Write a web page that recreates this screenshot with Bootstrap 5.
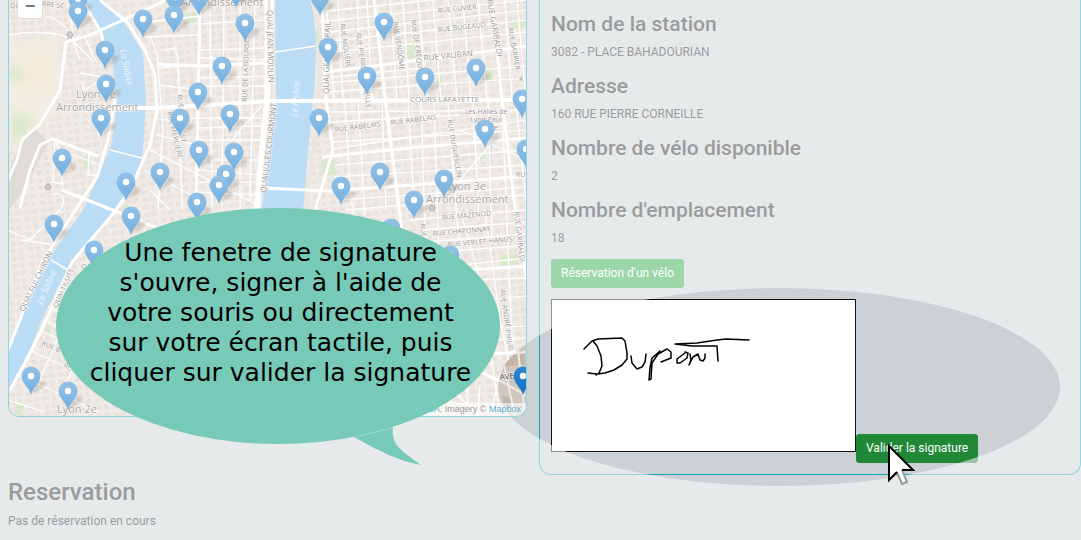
<!DOCTYPE html>
<html lang="fr">
<head>
<meta charset="utf-8">
<meta name="viewport" content="width=device-width, initial-scale=1">
<title>Location de vélos</title>
<link href="https://cdn.jsdelivr.net/npm/bootstrap@5.3.0/dist/css/bootstrap.min.css" rel="stylesheet">
<style>
  body { background: #cbd1d4; font-family: Roboto, sans-serif; font-size: 12px; line-height: 18px; color: #212529; }
  .page { min-height: 100vh; padding-left: 8px; }
  .station-grid { display: grid; grid-template-columns: 519fr 542fr; column-gap: 12px; }
  .map-box { z-index: 2; height: 417px; border: 1px solid #8fd3de; border-top: 0; border-radius: 0 0 12px 12px; background: #f2ede9; }
  .map-clip { border-radius: 0 0 11px 11px; }
  .zoom-out { z-index: 1; top: -6px; left: 9px; width: 24px; height: 24px; background: #fff; color: #777; border: 0; border-radius: 0 0 3px 3px; box-shadow: 0 0 2px #bbb; font: bold 18px/24px "Liberation Sans", sans-serif; }
  .attribution { z-index: 1; right: 0; bottom: 0; padding: 0 5px; background: rgba(255,255,255,.6); font: 9px/13px "Liberation Sans", sans-serif; color: #999; }
  .attribution a { color: #5aaed4; text-decoration: none; }
  .panel { height: 475px; border: 1px solid #17a2b8; border-top: 0; border-radius: 0 0 12px 12px; padding: 11px 11px 0; }
  .panel h2 { font-size: 21px; line-height: 26px; font-weight: 500; margin: 0 0 6px; }
  .panel p { margin: 0 0 12px; }
  .btn-go { --bs-btn-color: #fff; --bs-btn-bg: #28a745; --bs-btn-border-color: #28a745; --bs-btn-font-size: 12px; --bs-btn-line-height: 19px; --bs-btn-padding-x: 9px; --bs-btn-padding-y: 4px; --bs-btn-border-radius: 3px; }
  .btn-sign { --bs-btn-bg: #218838; --bs-btn-border-color: #218838; }
  .sign-row { margin-top: 11px; white-space: nowrap; }
  .sign-pad { width: 305px; height: 153px; background: #fff; border: 1px solid #111; vertical-align: baseline; }
  .spot { z-index: 1; left: -42px; top: 288px; width: 562px; height: 198px; border-radius: 50%; box-shadow: 0 0 0 2000px rgba(255,255,255,.54); pointer-events: none; }
  .pointer { z-index: 3; left: 345px; top: 443px; pointer-events: none; }
  .bubble { z-index: 4; left: 56px; top: 208px; width: 444px; height: 236px; }
  .bubble p { font: 25px/30px "DejaVu Sans", sans-serif; color: #000; text-align: center; white-space: nowrap; margin: 0; padding: 30px 0 0 5px; }
  .booking { padding-top: 2px; }
  .booking h1 { font-size: 24px; line-height: 30px; font-weight: 500; margin: 0 0 5px; }
  .lbl { font-family: "Open Sans", "Noto Sans", sans-serif; }
</style>
</head>
<body>
<main class="page position-relative overflow-hidden">
  <div class="station-grid">
    <section class="map-box position-relative" aria-label="Carte des stations">
      <div class="map-clip w-100 h-100 overflow-hidden position-relative">
      <svg class="d-block w-100 h-100" viewBox="9 0 517 416" preserveAspectRatio="xMidYMid slice">
        <defs>
          <linearGradient id="pinFill" x1="0" y1="0" x2="0" y2="1"><stop offset="0" stop-color="#93c1e6"/><stop offset="1" stop-color="#73b0e0"/></linearGradient>
          <linearGradient id="pinHot" x1="0" y1="0" x2="0" y2="1"><stop offset="0" stop-color="#2f86cc"/><stop offset="1" stop-color="#1170c2"/></linearGradient>
          <filter id="soft" x="-50%" y="-50%" width="200%" height="200%"><feGaussianBlur stdDeviation="1.3"/></filter>
          <filter id="haze"><feGaussianBlur stdDeviation="4"/></filter>
          <path id="drop" d="M0 19 C-1.5 12 -9.5 7 -9.5 0 A9.5 9.5 0 0 1 9.5 0 C9.5 7 1.5 12 0 19Z"/>
          <g id="pin">
            <path d="M0 18 L8 5 L15 6 L13 11Z" fill="#8d8781" opacity=".3" filter="url(#soft)"/>
            <use href="#drop" fill="url(#pinFill)"/><circle r="3.2" fill="#fff"/>
          </g>
          <pattern id="blocks" width="17" height="15" patternUnits="userSpaceOnUse" patternTransform="rotate(-6)">
            <path d="M2 2h5v4h-5zM9 1h6v5h-6zM1 9h6v4h-6zM10 9h4v5h-4z" fill="#eae3dd"/>
          </pattern>
        </defs>
        <rect x="8" width="519" height="417" fill="#f0ebe6"/>
        <rect x="8" width="519" height="417" fill="url(#blocks)"/>
        <!-- hillside, parks and squares -->
        <g filter="url(#haze)">
          <path d="M0 45L60 35L64 60L55 110L30 140L0 150Z" fill="#f1ede2"/>
          <path d="M8 68h14v12h-14zM10 117l18-5 4 13-18 18z" fill="#d8e8cb"/>
          <path d="M32 48l18 8-10 34-20-5z" fill="#f3edd9"/>
        </g>
        <path d="M8 175C16 150 24 136 36 130L49 142C38 160 28 190 8 210Z" fill="#dfdbd6"/>
        <g fill="#d9e9cd">
          <path d="M83 157l5-3 2 14-6 4zM186 14l10-2 1 9-11 3zM405 43l9-1 1 16-9 1zM321 160l13-1 2 16-14-1zM512 22l13-3v8l-12 2zM478 158l6-7 2 6-5 3zM438 74l5 2-1 8-5-1zM484 70l9-3v12l-9 3zM500 255l18-1v11l-18 1zM16 404l8 2-4 10h-6zM47 325l5 3-3 8-4-2zM317 28l4 3-2 12-5-2zM326 115l5 3-2 11h-5zM121 207l6-4 1 5-5 3z"/>
        </g>
        <!-- minor streets -->
        <g fill="none" stroke="#fff" stroke-width="1.3">
          <path d="M8 35C35 30 60 33 70 38M70 38L94 62M70 0L73 41L80 60M46 16C60 20 68 28 70 35M85 38L97 63M54 140L60 150L100 165M55 143L53 182L63 184M89 151L88 175L103 175M63 185L61 168L72 170M50 195C65 190 66 200 60 210M8 230L30 240L60 210M20 240L50 244M80 73L102 77M82 82L84 90L102 80M8 372L40 385L100 412M40 330L100 358M48 306L90 330M44 320L140 365M8 400L45 412M60 333L40 380M85 338L60 400M30 350L100 383"/>
          <path d="M146 37L200 35M148 22L200 16M151 37L157 55L163 130L158 210M165 50L175 48L178 60L182 210M158 68L198 65M160 85L198 90M161 120L197 118M157 135L197 145M150 150L258 205M145 170L200 200M150 190L170 210M198 24L266 20M198 50L266 48M198 58L266 60M198 78L266 76M198 86L266 86M197 118L262 118M197 128L262 126M197 140L262 140M197 170L260 175M197 182L260 182M197 192L258 195M210 10L212 210M224 0L222 210M240 0V210M255 0L250 200M232 140L262 105M210 160L260 160"/>
          <path d="M326 0L334 100M338 0L343 100M357 0L362 100M367 0L372 100M390 0L397 100M403 0L409 100M418 0L427 100M433 0L441 100M448 0L457 100M463 0L471 100M478 0L487 100M505 0L512 100M517 0L526 100"/>
          <path d="M318 12L527 -10M318 22L527 0M320 33L527 10M322 42L527 20M322 53L527 32M325 83L527 66M325 92L527 78M324 78L420 68"/>
          <path d="M345 100L350 190L360 260M358 100L365 215M382 100L386 210M408 100L414 200M421 100L426 260M434 100L439 260M448 100L460 260M473 100L479 220M488 100L492 240M502 100L515 416M516 100L527 210"/>
          <path d="M330 112L527 110M330 122L460 115M333 142L527 130M333 149L527 120M335 165L527 150M335 177L527 165M338 200L527 187M345 210L527 195M410 220L527 210M420 230L527 222M425 242L527 234M440 252L527 245M460 265L527 258M460 130L527 160M460 180L490 145"/>
          <path d="M460 210L480 280L500 416M485 210L500 320L520 416M470 280L527 278M480 300L527 296M480 328L527 326M490 340L527 338M480 370L527 400M480 385L478 416M466 370L468 416M450 388L480 416M440 400L527 416M500 375L490 416M470 370L440 416"/>
        </g>
        <!-- rivers -->
        <path d="M84 0L88 8L100 29L112 57L117 100L112 143L98 177L83 210L50 257L33 290L8 350V390L30 350L43 317L67 270L115 210L133 187L143 153L146 100L143 53L123 20L100 0Z" fill="#bbdcf5"/>
        <path d="M275 0L276 100L271 140L261 215H303L309 140L315 80L316 40L312 0Z" fill="#bbdcf5"/>
        <path d="M312 0L322 40L316 130L305 210M270 0L269 90L257 210" fill="none" stroke="#ece6df" stroke-width="4"/>
        <!-- main roads and bridges -->
        <g fill="none" stroke="#fff" stroke-width="3" stroke-linejoin="round">
          <path d="M8 180L17 160L22 140L40 124L60 90L66 42L90 35L125 19L150 8L165 0"/>
          <path d="M100 0L128 23L145 50L155 75L157 110L150 145L130 190L112 215L72 262L44 325L24 365L10 390"/>
          <path d="M82 0L101 32L107 60M115 100L108 140L97 177L74 212L42 262L20 320L8 350"/>
          <path d="M20 208L30 170L40 145L52 139L98 156M62 190L120 213L175 235"/>
          <path d="M112 108L156 108L272 101L527 100" stroke-width="4"/>
          <path d="M200 0L198 100L196 210M272 0L269 90L258 210M266 0V95L255 210M157 64L200 66L266 63"/>
          <path d="M322 0L326 100L333 150L315 210M374 0L384 90L398 200L402 230M492 0L502 100L514 200L527 280"/>
          <path d="M325 72L420 60L527 46M322 157L420 147L527 138M262 188L330 191L440 183L527 176M440 272L527 266M440 356L527 352M470 366L527 396"/>
          <path d="M275 52L316 46M110 150L142 158M51 260L68 270" stroke-width="1.5"/>
        </g>
        <!-- highlighted corner, undimmed -->
        <clipPath id="lit"><ellipse cx="779" cy="387" rx="281" ry="99"/></clipPath>
        <g clip-path="url(#lit)">
          <rect x="490" y="330" width="40" height="90" fill="#d2c7be"/>
          <path d="M500 356l25-2v10l-26 4zM502 395l10 4-1 10-8-4z" fill="#c3b5a8"/>
          <path d="M490 356L527 352M485 372L527 396M503 360L515 416M517 340L525 416" fill="none" stroke="#eee9e4" stroke-width="2"/>
        </g>
        <!-- street names -->
        <g class="lbl" font-size="7" fill="#9a9896" stroke="#fff" stroke-width="1.6" stroke-opacity=".65" paint-order="stroke">
          <text x="10" y="8">QU</text>
          <text transform="translate(42 6) rotate(6)">RRE SC</text>
          <text transform="translate(247 102) rotate(-88)">RUE DE LA BOURSE</text>
          <text transform="translate(177 95) rotate(83)">RUE</text>
          <text transform="translate(180 135) rotate(83)">ST</text>
          <text transform="translate(167 112) rotate(77)">RUE MERCIÈRE</text>
          <text transform="translate(267 10) rotate(89)" font-size="8">QUAI JEAN MOULIN</text>
          <text transform="translate(266 193) rotate(-83)" font-size="8">QUAI JULES COURMONT</text>
          <text transform="translate(329 94) rotate(-89)" font-size="8">QUAI GÉN. SARRAIL</text>
          <text transform="translate(340 24) rotate(82)">RUE MOLIÈRE</text>
          <text transform="translate(356 33) rotate(82)">RUE PIERRE CORNEILLE</text>
          <text transform="translate(393 22) rotate(82)">RUE VENDÔME</text>
          <text transform="translate(411 20) rotate(82)">RUE DE CRÉQUI</text>
          <text transform="translate(438 13) rotate(-6)">RUE CUVIER</text>
          <text transform="translate(438 32) rotate(-6)">RUE BUGEAUD</text>
          <text transform="translate(424 61) rotate(-6)" font-size="8">RUE VAUBAN</text>
          <text x="410" y="102" font-size="8">COURS LAFAYETTE</text>
          <text transform="translate(335 132) rotate(-7)">RUE RABELAIS</text>
          <text transform="translate(391 125) rotate(-7)">RUE RABELAIS</text>
          <text transform="translate(447 120) rotate(80)">RUE DUGUESCLIN</text>
          <text transform="translate(487 0) rotate(80)" font-size="8">RUE GARIBALDI</text>
          <text transform="translate(508 28) rotate(80)">RUE BARRIER</text>
          <text x="519" y="82">R</text><text x="516" y="177">RU</text>
          <text transform="translate(442 220) rotate(-5)">RUE MAZENOD</text>
          <text transform="translate(433 236) rotate(-5)">RUE CHAPONNAY</text>
          <text transform="translate(448 247) rotate(-5)">RUE VERLET-HANUS</text>
          <text transform="translate(514 212) rotate(83)">RUE GARIBALDI</text>
          <text transform="translate(420 224) rotate(83)">RUE</text>
          <text transform="translate(500 290) rotate(82)">RUE ANDRÉ PHILIP</text>
          <text transform="translate(24 312) rotate(-64)" font-size="8">QUAI FULCHIRON</text>
          <text transform="translate(57 308) rotate(-66)">QUAI TILSITT</text>
          <text transform="translate(41 345) rotate(22)">RUE B</text>
          <text transform="translate(63 367) rotate(28)">RU</text>
          <text transform="translate(84 270) rotate(-50)">Q</text>
          <text transform="translate(500 380) rotate(-6)" fill="#444" font-size="8">AVE</text>
        </g>
        <g class="lbl" font-size="7" fill="#9b95a5" text-anchor="middle" stroke="#fff" stroke-width="1.6" stroke-opacity=".65" paint-order="stroke">
          <text x="486" y="114">Les Halles de</text><text x="486" y="122">Lyon Paul</text><text x="486" y="130">Bocuse</text>
        </g>
        <g class="lbl" font-size="11" fill="#aaa6a3" stroke="#fff" stroke-width="1.6" stroke-opacity=".65" paint-order="stroke">
          <text x="76" y="98">Lyon 5e</text><text x="56" y="111">Arrondissement</text>
          <text x="181" y="6">Arrondissement</text>
          <text x="446" y="190">Lyon 3e</text><text x="426" y="203">Arrondissement</text>
          <text x="57" y="413">Lyon 2e</text>
        </g>
        <g class="lbl" font-size="9" font-style="italic" fill="#eef7ff">
          <text transform="translate(120 50) rotate(79)">La Saône</text>
          <text transform="translate(42 305) rotate(-66)">La Saône</text>
          <text transform="translate(297 117) rotate(-85)">Le Rhône</text>
        </g>
        <g fill="none" stroke="#9d9aa8" stroke-width=".8">
          <g id="metro"><rect x="67.500" y="33" width="5" height="4" rx="1"/><path d="M67.500 35h5M68 39l1-2M72 39l-1-2M68 32h4"/></g>
          <use href="#metro" x="-22" y="152"/><use href="#metro" x="362" y="173"/>
        </g>
        <!-- stations -->
        <use href="#pin" x="78" y="-1"/><use href="#pin" x="78" y="11"/><use href="#pin" x="175" y="-3"/><use href="#pin" x="199" y="-3"/><use href="#pin" x="236" y="-11"/><use href="#pin" x="320" y="-3"/>
        <use href="#pin" x="143" y="19"/><use href="#pin" x="174" y="15"/><use href="#pin" x="245" y="23"/><use href="#pin" x="384" y="22"/><use href="#pin" x="328" y="47"/>
        <use href="#pin" x="105" y="50"/><use href="#pin" x="222" y="66"/><use href="#pin" x="476" y="68"/><use href="#pin" x="367" y="76"/><use href="#pin" x="425" y="77"/>
        <use href="#pin" x="106" y="84"/><use href="#pin" x="198" y="92"/><use href="#pin" x="522" y="99"/><use href="#pin" x="230" y="114"/><use href="#pin" x="180" y="118"/>
        <use href="#pin" x="101" y="118"/><use href="#pin" x="319" y="118"/><use href="#pin" x="485" y="129"/><use href="#pin" x="526" y="149"/><use href="#pin" x="199" y="150"/>
        <use href="#pin" x="234" y="152"/><use href="#pin" x="62" y="158"/><use href="#pin" x="160" y="172"/><use href="#pin" x="226" y="174"/><use href="#pin" x="380" y="172"/>
        <use href="#pin" x="444" y="179"/><use href="#pin" x="126" y="182"/><use href="#pin" x="219" y="185"/><use href="#pin" x="341" y="186"/><use href="#pin" x="414" y="200"/>
        <use href="#pin" x="197" y="202"/><use href="#pin" x="131" y="216"/><use href="#pin" x="54" y="224"/><use href="#pin" x="391" y="228"/><use href="#pin" x="94" y="250"/>
        <use href="#pin" x="450" y="255"/><use href="#pin" x="31" y="376"/><use href="#pin" x="68" y="391"/>
        <use href="#drop" x="523" y="376" fill="url(#pinHot)"/><circle cx="523" cy="376" r="3.2" fill="#fff"/>
      </svg>
      <button type="button" class="zoom-out position-absolute p-0" aria-label="Zoom arrière">−</button>
      <div class="attribution position-absolute"><a href="#">SA</a>, Imagery © <a href="#">Mapbox</a></div>
      </div>
    </section>

    <section class="panel position-relative">
      <h2>Nom de la station</h2>
      <p>3082 - PLACE BAHADOURIAN</p>
      <h2>Adresse</h2>
      <p>160 RUE PIERRE CORNEILLE</p>
      <h2>Nombre de vélo disponible</h2>
      <p>2</p>
      <h2>Nombre d'emplacement</h2>
      <p>18</p>
      <button type="button" class="btn btn-go">Réservation d'un vélo</button>
      <div class="sign-row"><svg class="sign-pad" viewBox="0 0 303 151" role="img" aria-label="Signature" fill="none" stroke="#000" stroke-width="1.5" stroke-linejoin="round" stroke-linecap="round">
          <path d="M32 49L40 41L46 39L70 38L73 41L75 53V59L70 65L62 70L53 73L45 74L36 73M41 41L45 46L49 56L50 66L47 73L44 75"/>
          <path d="M79 56L80 63L85 69L90 67L93 62L94 54M108 51L100 58L98 68L97 80L99 79L100 63L106 54L115 49L119 52V58L109 62"/>
          <path d="M133 53L125 59L125 63L128 63L135 58L136 53L133 52M138 54L139 60L137 65L141 57L146 54L148 60L151 61L153 58V54"/>
          <path d="M123 44L145 43L165 40L174 39L197 40M123 44L140 46H165L166 61"/>
        </svg><button type="button" class="btn btn-go btn-sign">Valider la signature</button></div>
      <div class="spot position-absolute"></div>
      <svg class="pointer position-absolute" width="32" height="44" viewBox="0 0 32 44">
        <path d="M4 3V37L12 29L17 41L22 39L17 27H28Z" fill="#fff"/>
        <path d="M12 29L17 41L22 39L17 27" fill="none" stroke="#999" stroke-width="2"/>
        <path d="M12 29L4 37V3L28 27H17" fill="none" stroke="#000" stroke-width="2"/>
      </svg>
    </section>
  </div>

  <section class="booking">
    <h1>Reservation</h1>
    <p class="mb-0">Pas de réservation en cours</p>
  </section>

  <div class="bubble position-absolute" role="note">
    <svg class="position-absolute top-0 start-0" width="444" height="260" viewBox="0 0 444 260" fill="#77cab8">
      <ellipse cx="222" cy="118" rx="222" ry="118"/>
      <path d="M296 228L337 217C335 237 343 241 365 257C340 252 330 245 318 240Z"/>
      <path d="M298 229L336 220" stroke="#c9ebe3" stroke-dasharray="1 1"/>
    </svg>
    <p class="position-relative">Une fenetre de signature<br>s'ouvre, signer à l'aide de<br>votre souris ou directement<br>sur votre écran tactile, puis<br>cliquer sur valider la signature</p>
  </div>
</main>
<script src="https://cdn.jsdelivr.net/npm/bootstrap@5.3.0/dist/js/bootstrap.bundle.min.js"></script>
</body>
</html>
